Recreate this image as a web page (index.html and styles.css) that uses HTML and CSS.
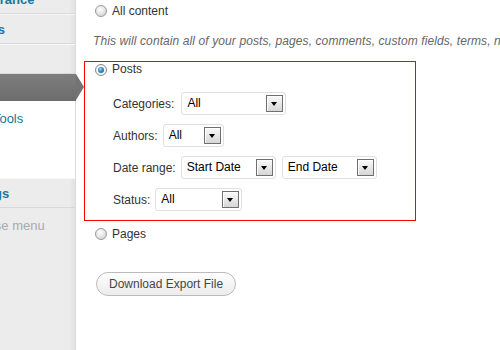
FILE: index.html
```html
<!DOCTYPE html>
<html lang="en">
<head>
    <meta charset="UTF-8">
    <title>Export</title>
    <link rel="stylesheet" href="styles.css">
</head>
<body>
    <div class="sidebar">
        <div class="menu-item first"><span class="menu-label">Appearance</span></div>
        <div class="menu-item"><span class="menu-label">Plugins</span></div>
        <div class="menu-item"><span class="menu-label">Users</span></div>
        <div class="menu-item current"><span class="menu-label">Tools</span></div>
        <div class="submenu">
            <div class="submenu-item">Available Tools</div>
            <div class="submenu-item short">Import</div>
            <div class="submenu-item short">Export</div>
        </div>
        <div class="menu-item"><span class="menu-label">Settings</span></div>
        <div class="collapse"><span class="menu-label">Collapse menu</span></div>
    </div>

    <div class="main">
        <div class="option first-option">
            <span class="radio"></span>
            <span>All content</span>
        </div>
        <p class="description">This will contain all of your posts, pages, comments, custom fields, terms, navigation menus and custom posts.</p>

        <div class="filters-box">
            <div class="option">
                <span class="radio checked"></span>
                <span>Posts</span>
            </div>
            <div class="filters">
                <div class="filter-row">
                    <label class="wide">Categories:</label>
                    <div class="select w-cat"><span>All</span><span class="arrow"></span></div>
                </div>
                <div class="filter-row">
                    <label>Authors:</label>
                    <div class="select w-auth"><span>All</span><span class="arrow"></span></div>
                </div>
                <div class="filter-row">
                    <label>Date range:</label>
                    <div class="select w-date"><span>Start Date</span><span class="arrow"></span></div>
                    <div class="select w-date gap"><span>End Date</span><span class="arrow"></span></div>
                </div>
                <div class="filter-row">
                    <label>Status:</label>
                    <div class="select w-status"><span>All</span><span class="arrow"></span></div>
                </div>
            </div>
        </div>

        <div class="option pages-option">
            <span class="radio"></span>
            <span>Pages</span>
        </div>

        <button class="button" type="button">Download Export File</button>
    </div>
</body>
</html>
```

FILE: styles.css
```css
body{
    margin: 0;
    font-family: "Liberation Sans", Arial, sans-serif;
    font-size: 12px;
    color: #333;
    background-color: #fff;
    display: flex;
    height: 350px;
    overflow: hidden;
}

/* admin menu */
.sidebar{
    width: 75px;
    flex-shrink: 0;
    height: 350px;
    background: linear-gradient(to right, #ececec 69px, #e2e2e2 75px);
    border-right: 1px solid #dcdcdc;
}
.menu-item{
    position: relative;
    box-sizing: border-box;
    height: 30px;
    border-top: 1px solid #f8f8f8;
    border-bottom: 1px solid #d9d9d9;
    line-height: 29px;
    font-size: 13px;
    font-weight: bold;
    color: #21759b;
    white-space: nowrap;
}
.menu-item.first{
    margin-top: -16px;
}
.menu-label{
    display: inline-block;
    margin-left: -42px;
}
.menu-item.first .menu-label{
    margin-left: -40px;
}
.menu-item.current{
    height: 27px;
    margin-right: -1px;
    border: none;
    background: linear-gradient(#7e7e7e, #6c6c6c);
    color: #fff;
}
.menu-item.current::after{
    content: "";
    position: absolute;
    right: -8px;
    top: 0;
    border-left: 8px solid #737373;
    border-top: 13.5px solid transparent;
    border-bottom: 13.5px solid transparent;
}
.submenu{
    height: 77px;
    box-sizing: border-box;
    padding-top: 10px;
    background-color: #fff;
    border-right: 1px solid #fff;
    white-space: nowrap;
    overflow: hidden;
}
.submenu-item{
    line-height: 16px;
    height: 23px;
    font-size: 13px;
    color: #21759b;
    margin-left: -63px;
}
.submenu-item.short{
    margin-left: -55px;
}
.collapse{
    height: 30px;
    line-height: 36px;
    color: #aaa;
    font-size: 13px;
    white-space: nowrap;
}

/* export form */
.main{
    flex: 1;
    padding-left: 19px;
    overflow: hidden;
    white-space: nowrap;
}
.option{
    display: flex;
    align-items: center;
    gap: 5px;
    line-height: 16px;
}
.first-option{
    margin-top: 3px;
}
.radio{
    box-sizing: border-box;
    width: 12px;
    height: 12px;
    border-radius: 50%;
    border: 1px solid #9a9a9a;
    background: radial-gradient(circle at 40% 35%, #fff 0, #e8e8e8 45%, #c9c9c9 100%);
    position: relative;
}
.radio.checked{
    border-color: #8a8a8a;
    background: radial-gradient(circle at 50% 50%, #fff 0, #ececec 100%);
}
.radio.checked::after{
    content: "";
    position: absolute;
    left: 2px;
    top: 2px;
    width: 6px;
    height: 6px;
    border-radius: 50%;
    background: radial-gradient(circle at 40% 35%, #9fd3f4 0, #2a86c8 50%, #134f7f 100%);
}
.description{
    margin: 14px 0 0 -2px;
    line-height: 16px;
    font-style: italic;
    color: #666;
    letter-spacing: 0.1px;
}
.filters-box{
    margin: 12px 0 0 -11px;
    width: 320px;
    border: 1px solid #f00;
    padding: 0 0 9px 10px;
}
.filters-box .option{
    line-height: 15px;
}
.filters{
    margin: 15px 0 0 18px;
    display: flex;
    flex-direction: column;
    gap: 9px;
}
.filter-row{
    display: flex;
    align-items: center;
    height: 23px;
}
.filter-row label{
    margin-right: 5px;
}
.filter-row label.wide{
    margin-right: 7px;
}
.select{
    position: relative;
    box-sizing: border-box;
    height: 23px;
    border: 1px solid #dfdfdf;
    border-radius: 3px;
    background-color: #fff;
    color: #000;
    line-height: 21px;
    padding-left: 5px;
}
.select.gap{
    margin-left: 6px;
}
.w-cat{ width: 105px; }
.w-auth{ width: 61px; }
.w-date{ width: 95px; }
.w-status{ width: 87px; }
.arrow{
    position: absolute;
    right: 2px;
    top: 2px;
    box-sizing: border-box;
    width: 17px;
    height: 17px;
    border: 1px solid #6f6f6f;
    background: linear-gradient(#fafafa, #d6d6d6);
    box-shadow: inset 1px 1px 0 #fff;
}
.arrow::after{
    content: "";
    position: absolute;
    left: 4px;
    top: 6px;
    border-top: 4px solid #000;
    border-left: 3.5px solid transparent;
    border-right: 3.5px solid transparent;
}
.pages-option{
    margin-top: 5px;
}
.button{
    margin: 30px 0 0 1px;
    height: 24px;
    padding: 0 12px;
    border: 1px solid #bbb;
    border-radius: 12px;
    background: linear-gradient(#fefefe, #ececec);
    font-family: "Liberation Sans", Arial, sans-serif;
    font-size: 12px;
    color: #464646;
    cursor: pointer;
}
```
